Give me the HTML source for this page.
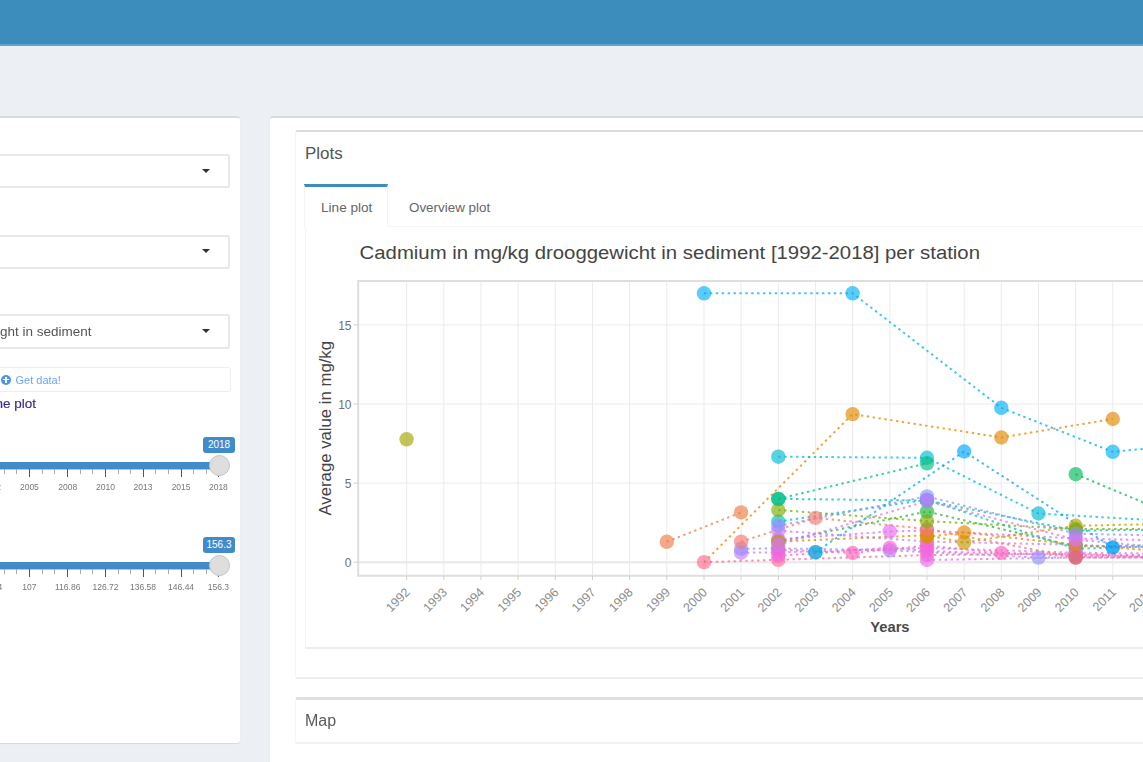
<!DOCTYPE html>
<html><head><meta charset="utf-8"><style>
html,body{margin:0;padding:0;width:1143px;height:762px;overflow:hidden;background:#ecf0f5;font-family:"Liberation Sans",sans-serif;position:relative}
svg text{font-family:"Liberation Sans",sans-serif}
.abs{position:absolute}
</style></head><body><div id="wrap" style="position:absolute;left:0;top:0;width:1143px;height:762px;overflow:hidden;filter:blur(0.45px)">
<div class="abs" style="left:0;top:0;width:1143px;height:46px;background:#3c8dbc;border-bottom:2px solid #62a3cb;box-sizing:border-box"></div>
<!-- left box -->
<div class="abs" style="left:-10px;top:116px;width:250px;height:627px;background:#fff;border-top:2.5px solid #d6dae2;box-sizing:border-box;border-radius:3px;box-shadow:0 1px 1px rgba(0,0,0,0.1)"></div>
<div style="position:absolute;left:-10px;top:153.8px;width:240px;height:34.5px;border:2px solid #e8e8e8;border-radius:2px;background:#fff;box-sizing:border-box"></div>
<div style="position:absolute;left:201.8px;top:168.8px;width:0;height:0;border-left:4.3px solid transparent;border-right:4.3px solid transparent;border-top:4.6px solid #333"></div>
<div style="position:absolute;left:-10px;top:234.5px;width:240px;height:34.5px;border:2px solid #e8e8e8;border-radius:2px;background:#fff;box-sizing:border-box"></div>
<div style="position:absolute;left:201.8px;top:249.4px;width:0;height:0;border-left:4.3px solid transparent;border-right:4.3px solid transparent;border-top:4.6px solid #333"></div>
<div style="position:absolute;left:-10px;top:314px;width:240px;height:34.5px;border:2px solid #e8e8e8;border-radius:2px;background:#fff;box-sizing:border-box"></div>
<div style="position:absolute;left:201.8px;top:328.9px;width:0;height:0;border-left:4.3px solid transparent;border-right:4.3px solid transparent;border-top:4.6px solid #333"></div>
<div style="position:absolute;left:-100px;top:315px;width:191.5px;height:34.5px;line-height:34.5px;text-align:right;font-size:13.5px;color:#555;white-space:nowrap">ght in sediment</div>
<div class="abs" style="left:-10px;top:367px;width:241px;height:25px;border:1px solid #eeeeee;border-radius:3px;box-sizing:border-box;background:#fff"></div>
<div class="abs" style="left:1px;top:374.5px;width:10px;height:10px;border-radius:50%;background:#4d94f0"></div>
<div class="abs" style="left:5.3px;top:376.5px;width:1.6px;height:6px;background:#fff"></div>
<div class="abs" style="left:3px;top:378.7px;width:6px;height:1.6px;background:#fff"></div>
<div class="abs" style="left:15.5px;top:373px;font-size:11px;line-height:14px;color:#6aa6f5;white-space:nowrap">Get data!</div>
<div class="abs" style="left:-100px;top:395.5px;width:136px;text-align:right;font-size:13.5px;line-height:16px;font-weight:normal;-webkit-text-stroke:0.15px #3b2a8a;color:#3b2a8a;white-space:nowrap">the plot</div>
<div style="position:absolute;left:203px;top:436.5px;width:32px;height:16px;background:#428bca;border-radius:3px;color:#fff;font-size:10px;line-height:16px;text-align:center">2018</div>
<div style="position:absolute;left:-5px;top:462px;width:224px;height:7px;background:#428bca"></div>
<div style="position:absolute;left:-5px;top:469px;width:224px;height:1px;background:#a9c9e8"></div>
<div style="position:absolute;left:-8.9px;top:469px;width:1.2px;height:8px;background:#555"></div>
<div style="position:absolute;left:3.7px;top:469px;width:1px;height:5px;background:#aaa"></div>
<div style="position:absolute;left:16.3px;top:469px;width:1px;height:5px;background:#aaa"></div>
<div style="position:absolute;left:28.9px;top:469px;width:1.2px;height:8px;background:#555"></div>
<div style="position:absolute;left:41.5px;top:469px;width:1px;height:5px;background:#aaa"></div>
<div style="position:absolute;left:54.1px;top:469px;width:1px;height:5px;background:#aaa"></div>
<div style="position:absolute;left:67.2px;top:469px;width:1.2px;height:8px;background:#555"></div>
<div style="position:absolute;left:79.8px;top:469px;width:1px;height:5px;background:#aaa"></div>
<div style="position:absolute;left:92.4px;top:469px;width:1px;height:5px;background:#aaa"></div>
<div style="position:absolute;left:105.0px;top:469px;width:1.2px;height:8px;background:#555"></div>
<div style="position:absolute;left:117.6px;top:469px;width:1px;height:5px;background:#aaa"></div>
<div style="position:absolute;left:130.2px;top:469px;width:1px;height:5px;background:#aaa"></div>
<div style="position:absolute;left:142.5px;top:469px;width:1.2px;height:8px;background:#555"></div>
<div style="position:absolute;left:155.1px;top:469px;width:1px;height:5px;background:#aaa"></div>
<div style="position:absolute;left:167.7px;top:469px;width:1px;height:5px;background:#aaa"></div>
<div style="position:absolute;left:180.6px;top:469px;width:1.2px;height:8px;background:#555"></div>
<div style="position:absolute;left:193.2px;top:469px;width:1px;height:5px;background:#aaa"></div>
<div style="position:absolute;left:205.8px;top:469px;width:1px;height:5px;background:#aaa"></div>
<div style="position:absolute;left:217.9px;top:469px;width:1.2px;height:8px;background:#555"></div>
<div style="position:absolute;left:-38.4px;top:482px;width:60px;text-align:center;font-size:8.5px;color:#777;line-height:10px">2002</div>
<div style="position:absolute;left:-0.6px;top:482px;width:60px;text-align:center;font-size:8.5px;color:#777;line-height:10px">2005</div>
<div style="position:absolute;left:37.7px;top:482px;width:60px;text-align:center;font-size:8.5px;color:#777;line-height:10px">2008</div>
<div style="position:absolute;left:75.5px;top:482px;width:60px;text-align:center;font-size:8.5px;color:#777;line-height:10px">2010</div>
<div style="position:absolute;left:113.0px;top:482px;width:60px;text-align:center;font-size:8.5px;color:#777;line-height:10px">2013</div>
<div style="position:absolute;left:151.1px;top:482px;width:60px;text-align:center;font-size:8.5px;color:#777;line-height:10px">2015</div>
<div style="position:absolute;left:188.4px;top:482px;width:60px;text-align:center;font-size:8.5px;color:#777;line-height:10px">2018</div>
<div style="position:absolute;left:208.5px;top:454.5px;width:19px;height:19px;border-radius:50%;background:#dedede;border:1px solid #c4c4c4"></div>
<div style="position:absolute;left:203px;top:537px;width:32px;height:16px;background:#428bca;border-radius:3px;color:#fff;font-size:10px;line-height:16px;text-align:center">156.3</div>
<div style="position:absolute;left:-5px;top:562px;width:224px;height:7px;background:#428bca"></div>
<div style="position:absolute;left:-5px;top:569px;width:224px;height:1px;background:#a9c9e8"></div>
<div style="position:absolute;left:-8.9px;top:569px;width:1.2px;height:8px;background:#555"></div>
<div style="position:absolute;left:3.7px;top:569px;width:1px;height:5px;background:#aaa"></div>
<div style="position:absolute;left:16.3px;top:569px;width:1px;height:5px;background:#aaa"></div>
<div style="position:absolute;left:28.9px;top:569px;width:1.2px;height:8px;background:#555"></div>
<div style="position:absolute;left:41.5px;top:569px;width:1px;height:5px;background:#aaa"></div>
<div style="position:absolute;left:54.1px;top:569px;width:1px;height:5px;background:#aaa"></div>
<div style="position:absolute;left:67.2px;top:569px;width:1.2px;height:8px;background:#555"></div>
<div style="position:absolute;left:79.8px;top:569px;width:1px;height:5px;background:#aaa"></div>
<div style="position:absolute;left:92.4px;top:569px;width:1px;height:5px;background:#aaa"></div>
<div style="position:absolute;left:105.0px;top:569px;width:1.2px;height:8px;background:#555"></div>
<div style="position:absolute;left:117.6px;top:569px;width:1px;height:5px;background:#aaa"></div>
<div style="position:absolute;left:130.2px;top:569px;width:1px;height:5px;background:#aaa"></div>
<div style="position:absolute;left:142.5px;top:569px;width:1.2px;height:8px;background:#555"></div>
<div style="position:absolute;left:155.1px;top:569px;width:1px;height:5px;background:#aaa"></div>
<div style="position:absolute;left:167.7px;top:569px;width:1px;height:5px;background:#aaa"></div>
<div style="position:absolute;left:180.6px;top:569px;width:1.2px;height:8px;background:#555"></div>
<div style="position:absolute;left:193.2px;top:569px;width:1px;height:5px;background:#aaa"></div>
<div style="position:absolute;left:205.8px;top:569px;width:1px;height:5px;background:#aaa"></div>
<div style="position:absolute;left:217.9px;top:569px;width:1.2px;height:8px;background:#555"></div>
<div style="position:absolute;left:-38.4px;top:582px;width:60px;text-align:center;font-size:8.5px;color:#777;line-height:10px">97.14</div>
<div style="position:absolute;left:-0.6px;top:582px;width:60px;text-align:center;font-size:8.5px;color:#777;line-height:10px">107</div>
<div style="position:absolute;left:37.7px;top:582px;width:60px;text-align:center;font-size:8.5px;color:#777;line-height:10px">116.86</div>
<div style="position:absolute;left:75.5px;top:582px;width:60px;text-align:center;font-size:8.5px;color:#777;line-height:10px">126.72</div>
<div style="position:absolute;left:113.0px;top:582px;width:60px;text-align:center;font-size:8.5px;color:#777;line-height:10px">136.58</div>
<div style="position:absolute;left:151.1px;top:582px;width:60px;text-align:center;font-size:8.5px;color:#777;line-height:10px">146.44</div>
<div style="position:absolute;left:188.4px;top:582px;width:60px;text-align:center;font-size:8.5px;color:#777;line-height:10px">156.3</div>
<div style="position:absolute;left:208.5px;top:554.5px;width:19px;height:19px;border-radius:50%;background:#dedede;border:1px solid #c4c4c4"></div>
<!-- right box -->
<div class="abs" style="left:270px;top:116px;width:900px;height:700px;background:#fff;border-top:2.5px solid #d6dae2;box-sizing:border-box;border-radius:3px;box-shadow:0 1px 1px rgba(0,0,0,0.1)"></div>
<div class="abs" style="left:295px;top:130px;width:900px;height:549px;background:#fff;border-top:2px solid #d8dbe0;border-left:1px solid #f5f5f5;border-bottom:2px solid #ececec;box-sizing:border-box;border-radius:3px"></div>
<div class="abs" style="left:305px;top:143.8px;font-size:17px;line-height:20px;color:#555">Plots</div>
<div class="abs" style="left:304px;top:184px;width:84px;height:43px;border-top:3px solid #3c8dbc;box-sizing:border-box;border-left:1px solid #f4f4f4;border-right:1px solid #f4f4f4"></div>
<div class="abs" style="left:388px;top:226px;width:800px;height:1px;background:#f4f4f4"></div>
<div class="abs" style="left:305px;top:227px;width:900px;height:422px;border-left:1px solid #f4f4f4;border-bottom:2px solid #eeeeee;box-sizing:border-box"></div>
<div class="abs" style="left:321px;top:200px;font-size:13.6px;line-height:16px;color:#666;white-space:nowrap">Line plot</div>
<div class="abs" style="left:409px;top:200px;font-size:13.4px;line-height:16px;color:#666;white-space:nowrap">Overview plot</div>
<svg id="chart" width="1143" height="762" viewBox="0 0 1143 762" style="position:absolute;left:0;top:0">
<defs><clipPath id="pc"><rect x="359" y="282" width="800" height="293"/></clipPath></defs>
<line x1="359" x2="1143" y1="324.9" y2="324.9" stroke="#ebebeb" stroke-width="1"/>
<line x1="359" x2="1143" y1="404.0" y2="404.0" stroke="#ebebeb" stroke-width="1"/>
<line x1="359" x2="1143" y1="483.1" y2="483.1" stroke="#ebebeb" stroke-width="1"/>
<line x1="359" x2="1143" y1="562.2" y2="562.2" stroke="#ebebeb" stroke-width="2.5"/>
<line x1="406.6" x2="406.6" y1="282" y2="575" stroke="#ebebeb" stroke-width="1"/>
<line x1="443.8" x2="443.8" y1="282" y2="575" stroke="#ebebeb" stroke-width="1"/>
<line x1="480.9" x2="480.9" y1="282" y2="575" stroke="#ebebeb" stroke-width="1"/>
<line x1="518.1" x2="518.1" y1="282" y2="575" stroke="#ebebeb" stroke-width="1"/>
<line x1="555.3" x2="555.3" y1="282" y2="575" stroke="#ebebeb" stroke-width="1"/>
<line x1="592.5" x2="592.5" y1="282" y2="575" stroke="#ebebeb" stroke-width="1"/>
<line x1="629.6" x2="629.6" y1="282" y2="575" stroke="#ebebeb" stroke-width="1"/>
<line x1="666.8" x2="666.8" y1="282" y2="575" stroke="#ebebeb" stroke-width="1"/>
<line x1="704.0" x2="704.0" y1="282" y2="575" stroke="#ebebeb" stroke-width="1"/>
<line x1="741.1" x2="741.1" y1="282" y2="575" stroke="#ebebeb" stroke-width="1"/>
<line x1="778.3" x2="778.3" y1="282" y2="575" stroke="#ebebeb" stroke-width="1"/>
<line x1="815.5" x2="815.5" y1="282" y2="575" stroke="#ebebeb" stroke-width="1"/>
<line x1="852.6" x2="852.6" y1="282" y2="575" stroke="#ebebeb" stroke-width="1"/>
<line x1="889.8" x2="889.8" y1="282" y2="575" stroke="#ebebeb" stroke-width="1"/>
<line x1="927.0" x2="927.0" y1="282" y2="575" stroke="#ebebeb" stroke-width="1"/>
<line x1="964.2" x2="964.2" y1="282" y2="575" stroke="#ebebeb" stroke-width="1"/>
<line x1="1001.3" x2="1001.3" y1="282" y2="575" stroke="#ebebeb" stroke-width="1"/>
<line x1="1038.5" x2="1038.5" y1="282" y2="575" stroke="#ebebeb" stroke-width="1"/>
<line x1="1075.7" x2="1075.7" y1="282" y2="575" stroke="#ebebeb" stroke-width="1"/>
<line x1="1112.8" x2="1112.8" y1="282" y2="575" stroke="#ebebeb" stroke-width="1"/>
<line x1="1150.0" x2="1150.0" y1="282" y2="575" stroke="#ebebeb" stroke-width="1"/>
<path d="M358.2 575.7 V281 H1143" fill="none" stroke="#dedede" stroke-width="2"/>
<line x1="357" x2="1143" y1="575.7" y2="575.7" stroke="#dedede" stroke-width="2"/>
<line x1="353.5" x2="358" y1="324.9" y2="324.9" stroke="#d0d0d0" stroke-width="1"/>
<text x="351.5" y="329.9" text-anchor="end" font-size="12" fill="#707070">15</text>
<line x1="353.5" x2="358" y1="404.0" y2="404.0" stroke="#d0d0d0" stroke-width="1"/>
<text x="351.5" y="409.0" text-anchor="end" font-size="12" fill="#707070">10</text>
<line x1="353.5" x2="358" y1="483.1" y2="483.1" stroke="#d0d0d0" stroke-width="1"/>
<text x="351.5" y="488.1" text-anchor="end" font-size="12" fill="#707070">5</text>
<line x1="353.5" x2="358" y1="562.2" y2="562.2" stroke="#d0d0d0" stroke-width="1"/>
<text x="351.5" y="567.2" text-anchor="end" font-size="12" fill="#707070">0</text>
<line x1="406.6" x2="406.6" y1="576" y2="580" stroke="#d0d0d0" stroke-width="1"/>
<text transform="translate(410.6,593) rotate(-45)" text-anchor="end" font-size="12.5" fill="#8c8c8c">1992</text>
<line x1="443.8" x2="443.8" y1="576" y2="580" stroke="#d0d0d0" stroke-width="1"/>
<text transform="translate(447.8,593) rotate(-45)" text-anchor="end" font-size="12.5" fill="#8c8c8c">1993</text>
<line x1="480.9" x2="480.9" y1="576" y2="580" stroke="#d0d0d0" stroke-width="1"/>
<text transform="translate(484.9,593) rotate(-45)" text-anchor="end" font-size="12.5" fill="#8c8c8c">1994</text>
<line x1="518.1" x2="518.1" y1="576" y2="580" stroke="#d0d0d0" stroke-width="1"/>
<text transform="translate(522.1,593) rotate(-45)" text-anchor="end" font-size="12.5" fill="#8c8c8c">1995</text>
<line x1="555.3" x2="555.3" y1="576" y2="580" stroke="#d0d0d0" stroke-width="1"/>
<text transform="translate(559.3,593) rotate(-45)" text-anchor="end" font-size="12.5" fill="#8c8c8c">1996</text>
<line x1="592.5" x2="592.5" y1="576" y2="580" stroke="#d0d0d0" stroke-width="1"/>
<text transform="translate(596.5,593) rotate(-45)" text-anchor="end" font-size="12.5" fill="#8c8c8c">1997</text>
<line x1="629.6" x2="629.6" y1="576" y2="580" stroke="#d0d0d0" stroke-width="1"/>
<text transform="translate(633.6,593) rotate(-45)" text-anchor="end" font-size="12.5" fill="#8c8c8c">1998</text>
<line x1="666.8" x2="666.8" y1="576" y2="580" stroke="#d0d0d0" stroke-width="1"/>
<text transform="translate(670.8,593) rotate(-45)" text-anchor="end" font-size="12.5" fill="#8c8c8c">1999</text>
<line x1="704.0" x2="704.0" y1="576" y2="580" stroke="#d0d0d0" stroke-width="1"/>
<text transform="translate(708.0,593) rotate(-45)" text-anchor="end" font-size="12.5" fill="#8c8c8c">2000</text>
<line x1="741.1" x2="741.1" y1="576" y2="580" stroke="#d0d0d0" stroke-width="1"/>
<text transform="translate(745.1,593) rotate(-45)" text-anchor="end" font-size="12.5" fill="#8c8c8c">2001</text>
<line x1="778.3" x2="778.3" y1="576" y2="580" stroke="#d0d0d0" stroke-width="1"/>
<text transform="translate(782.3,593) rotate(-45)" text-anchor="end" font-size="12.5" fill="#8c8c8c">2002</text>
<line x1="815.5" x2="815.5" y1="576" y2="580" stroke="#d0d0d0" stroke-width="1"/>
<text transform="translate(819.5,593) rotate(-45)" text-anchor="end" font-size="12.5" fill="#8c8c8c">2003</text>
<line x1="852.6" x2="852.6" y1="576" y2="580" stroke="#d0d0d0" stroke-width="1"/>
<text transform="translate(856.6,593) rotate(-45)" text-anchor="end" font-size="12.5" fill="#8c8c8c">2004</text>
<line x1="889.8" x2="889.8" y1="576" y2="580" stroke="#d0d0d0" stroke-width="1"/>
<text transform="translate(893.8,593) rotate(-45)" text-anchor="end" font-size="12.5" fill="#8c8c8c">2005</text>
<line x1="927.0" x2="927.0" y1="576" y2="580" stroke="#d0d0d0" stroke-width="1"/>
<text transform="translate(931.0,593) rotate(-45)" text-anchor="end" font-size="12.5" fill="#8c8c8c">2006</text>
<line x1="964.2" x2="964.2" y1="576" y2="580" stroke="#d0d0d0" stroke-width="1"/>
<text transform="translate(968.2,593) rotate(-45)" text-anchor="end" font-size="12.5" fill="#8c8c8c">2007</text>
<line x1="1001.3" x2="1001.3" y1="576" y2="580" stroke="#d0d0d0" stroke-width="1"/>
<text transform="translate(1005.3,593) rotate(-45)" text-anchor="end" font-size="12.5" fill="#8c8c8c">2008</text>
<line x1="1038.5" x2="1038.5" y1="576" y2="580" stroke="#d0d0d0" stroke-width="1"/>
<text transform="translate(1042.5,593) rotate(-45)" text-anchor="end" font-size="12.5" fill="#8c8c8c">2009</text>
<line x1="1075.7" x2="1075.7" y1="576" y2="580" stroke="#d0d0d0" stroke-width="1"/>
<text transform="translate(1079.7,593) rotate(-45)" text-anchor="end" font-size="12.5" fill="#8c8c8c">2010</text>
<line x1="1112.8" x2="1112.8" y1="576" y2="580" stroke="#d0d0d0" stroke-width="1"/>
<text transform="translate(1116.8,593) rotate(-45)" text-anchor="end" font-size="12.5" fill="#8c8c8c">2011</text>
<line x1="1150.0" x2="1150.0" y1="576" y2="580" stroke="#d0d0d0" stroke-width="1"/>
<text transform="translate(1154.0,593) rotate(-45)" text-anchor="end" font-size="12.5" fill="#8c8c8c">2012</text>
<text x="359.6" y="258.6" font-size="19.2" fill="#444" textLength="620.4" lengthAdjust="spacingAndGlyphs">Cadmium in mg/kg drooggewicht in sediment [1992-2018] per station</text>
<text x="870.2" y="632.4" font-size="15.2" font-weight="bold" fill="#4a4a4a" textLength="39.4" lengthAdjust="spacingAndGlyphs">Years</text>
<text transform="translate(330.5,515.5) rotate(-90)" font-size="16.6" fill="#444" textLength="174.5" lengthAdjust="spacingAndGlyphs">Average value in mg/kg</text>
<g clip-path="url(#pc)">
<path d="M704.0 562.2 L852.6 414.1 L1001.3 437.5 L1112.8 419.0" fill="none" stroke="#E38900" stroke-width="2" stroke-dasharray="2.4 3.5" opacity="0.75"/>
<path d="M778.3 541.6 L927.0 511.6 L1075.7 546.4 L1150.0 545.6" fill="none" stroke="#1DB53A" stroke-width="2" stroke-dasharray="2.4 3.5" opacity="0.75"/>
<path d="M778.3 498.9 L927.0 500.5 L1075.7 530.6 L1150.0 529.8" fill="none" stroke="#00C1A7" stroke-width="2" stroke-dasharray="2.4 3.5" opacity="0.75"/>
<path d="M778.3 521.5 L927.0 499.7 L1075.7 548.8 L1150.0 546.4" fill="none" stroke="#00BFC4" stroke-width="2" stroke-dasharray="2.4 3.5" opacity="0.75"/>
<path d="M704.0 562.2 L778.3 559.8 L927.0 555.1 L1075.7 553.5 L1150.0 557.5" fill="none" stroke="#FF6C90" stroke-width="2" stroke-dasharray="2.4 3.5" opacity="0.75"/>
<path d="M741.1 552.7 L778.3 552.4 L927.0 548.0 L1075.7 552.7 L1150.0 553.5" fill="none" stroke="#C77CFF" stroke-width="2" stroke-dasharray="2.4 3.5" opacity="0.75"/>
<path d="M741.1 548.8 L778.3 548.3 L889.8 550.3 L1038.5 557.6 L1150.0 556.7" fill="none" stroke="#9590FF" stroke-width="2" stroke-dasharray="2.4 3.5" opacity="0.75"/>
<path d="M778.3 530.6 L927.0 541.6 L1075.7 544.8 L1150.0 548.0" fill="none" stroke="#C77CFF" stroke-width="2" stroke-dasharray="2.4 3.5" opacity="0.75"/>
<path d="M778.3 549.5 L852.6 553.0 L927.0 545.6 L1001.3 552.9 L1075.7 554.3 L1150.0 555.9" fill="none" stroke="#FF62BC" stroke-width="2" stroke-dasharray="2.4 3.5" opacity="0.75"/>
<path d="M778.3 555.9 L889.8 547.6 L927.0 551.1 L1075.7 555.9 L1150.0 555.1" fill="none" stroke="#FA62DB" stroke-width="2" stroke-dasharray="2.4 3.5" opacity="0.75"/>
<path d="M927.0 560.0 L1075.7 557.5 L1150.0 557.5" fill="none" stroke="#E76BF3" stroke-width="2" stroke-dasharray="2.4 3.5" opacity="0.75"/>
<path d="M778.3 539.3 L889.8 531.4 L927.0 530.6 L1075.7 538.5 L1150.0 540.1" fill="none" stroke="#E76BF3" stroke-width="2" stroke-dasharray="2.4 3.5" opacity="0.75"/>
<path d="M778.3 541.6 L927.0 535.3 L964.2 542.4 L1075.7 525.8 L1150.0 524.2" fill="none" stroke="#C49A00" stroke-width="2" stroke-dasharray="2.4 3.5" opacity="0.75"/>
<path d="M927.0 536.9 L964.2 532.5 L1075.7 544.8 L1150.0 550.3" fill="none" stroke="#E38900" stroke-width="2" stroke-dasharray="2.4 3.5" opacity="0.75"/>
<path d="M741.1 541.6 L815.5 517.9 L927.0 529.0 L1075.7 557.6 L1150.0 557.5" fill="none" stroke="#F8766D" stroke-width="2" stroke-dasharray="2.4 3.5" opacity="0.75"/>
<path d="M778.3 510.0 L927.0 521.1 L1075.7 529.0 L1150.0 529.0" fill="none" stroke="#7CAE00" stroke-width="2" stroke-dasharray="2.4 3.5" opacity="0.75"/>
<path d="M778.3 525.8 L927.0 496.4 L1075.7 533.7 L1150.0 535.3" fill="none" stroke="#9590FF" stroke-width="2" stroke-dasharray="2.4 3.5" opacity="0.75"/>
<path d="M778.3 544.8 L927.0 501.0 L1075.7 539.6 L1150.0 546.4" fill="none" stroke="#D575FE" stroke-width="2" stroke-dasharray="2.4 3.5" opacity="0.75"/>
<path d="M666.8 541.8 L741.1 512.4" fill="none" stroke="#EE7D45" stroke-width="2" stroke-dasharray="2.4 3.5" opacity="0.75"/>
<path d="M704.0 293.3 L852.6 293.3 L1001.3 407.8 L1112.8 451.8 L1150.0 448.3" fill="none" stroke="#00B0F6" stroke-width="2" stroke-dasharray="2.4 3.5" opacity="0.75"/>
<path d="M778.3 456.7 L927.0 457.8 L1038.5 513.5 L1150.0 520.0" fill="none" stroke="#00BCD6" stroke-width="2" stroke-dasharray="2.4 3.5" opacity="0.75"/>
<path d="M778.3 498.9 L927.0 463.3" fill="none" stroke="#00BF7D" stroke-width="2" stroke-dasharray="2.4 3.5" opacity="0.75"/>
<path d="M1075.7 474.2 L1150.0 505.2" fill="none" stroke="#00BA5A" stroke-width="2" stroke-dasharray="2.4 3.5" opacity="0.75"/>
<path d="M815.5 552.2 L964.2 451.5 L1112.8 547.5" fill="none" stroke="#00A5FF" stroke-width="2" stroke-dasharray="2.4 3.5" opacity="0.75"/>
<circle cx="406.6" cy="439.3" r="7.2" fill="#A3A500" fill-opacity="0.65"/>
<circle cx="852.6" cy="414.1" r="7.2" fill="#E38900" fill-opacity="0.65"/>
<circle cx="1001.3" cy="437.5" r="7.2" fill="#E38900" fill-opacity="0.65"/>
<circle cx="1112.8" cy="419.0" r="7.2" fill="#E38900" fill-opacity="0.65"/>
<circle cx="778.3" cy="541.6" r="7.2" fill="#1DB53A" fill-opacity="0.65"/>
<circle cx="927.0" cy="511.6" r="7.2" fill="#1DB53A" fill-opacity="0.65"/>
<circle cx="1075.7" cy="546.4" r="7.2" fill="#1DB53A" fill-opacity="0.65"/>
<circle cx="1150.0" cy="545.6" r="7.2" fill="#1DB53A" fill-opacity="0.65"/>
<circle cx="778.3" cy="498.9" r="7.2" fill="#00C1A7" fill-opacity="0.65"/>
<circle cx="927.0" cy="500.5" r="7.2" fill="#00C1A7" fill-opacity="0.65"/>
<circle cx="1075.7" cy="530.6" r="7.2" fill="#00C1A7" fill-opacity="0.65"/>
<circle cx="1150.0" cy="529.8" r="7.2" fill="#00C1A7" fill-opacity="0.65"/>
<circle cx="778.3" cy="521.5" r="7.2" fill="#00BFC4" fill-opacity="0.65"/>
<circle cx="927.0" cy="499.7" r="7.2" fill="#00BFC4" fill-opacity="0.65"/>
<circle cx="1075.7" cy="548.8" r="7.2" fill="#00BFC4" fill-opacity="0.65"/>
<circle cx="1150.0" cy="546.4" r="7.2" fill="#00BFC4" fill-opacity="0.65"/>
<circle cx="704.0" cy="562.2" r="7.2" fill="#FF6C90" fill-opacity="0.65"/>
<circle cx="778.3" cy="559.8" r="7.2" fill="#FF6C90" fill-opacity="0.65"/>
<circle cx="927.0" cy="555.1" r="7.2" fill="#FF6C90" fill-opacity="0.65"/>
<circle cx="1075.7" cy="553.5" r="7.2" fill="#FF6C90" fill-opacity="0.65"/>
<circle cx="1150.0" cy="557.5" r="7.2" fill="#FF6C90" fill-opacity="0.65"/>
<circle cx="741.1" cy="552.7" r="7.2" fill="#C77CFF" fill-opacity="0.65"/>
<circle cx="778.3" cy="552.4" r="7.2" fill="#C77CFF" fill-opacity="0.65"/>
<circle cx="927.0" cy="548.0" r="7.2" fill="#C77CFF" fill-opacity="0.65"/>
<circle cx="1075.7" cy="552.7" r="7.2" fill="#C77CFF" fill-opacity="0.65"/>
<circle cx="1150.0" cy="553.5" r="7.2" fill="#C77CFF" fill-opacity="0.65"/>
<circle cx="741.1" cy="548.8" r="7.2" fill="#9590FF" fill-opacity="0.65"/>
<circle cx="778.3" cy="548.3" r="7.2" fill="#9590FF" fill-opacity="0.65"/>
<circle cx="889.8" cy="550.3" r="7.2" fill="#9590FF" fill-opacity="0.65"/>
<circle cx="1038.5" cy="557.6" r="7.2" fill="#9590FF" fill-opacity="0.65"/>
<circle cx="1150.0" cy="556.7" r="7.2" fill="#9590FF" fill-opacity="0.65"/>
<circle cx="778.3" cy="530.6" r="7.2" fill="#C77CFF" fill-opacity="0.65"/>
<circle cx="927.0" cy="541.6" r="7.2" fill="#C77CFF" fill-opacity="0.65"/>
<circle cx="1075.7" cy="544.8" r="7.2" fill="#C77CFF" fill-opacity="0.65"/>
<circle cx="1150.0" cy="548.0" r="7.2" fill="#C77CFF" fill-opacity="0.65"/>
<circle cx="778.3" cy="549.5" r="7.2" fill="#FF62BC" fill-opacity="0.65"/>
<circle cx="852.6" cy="553.0" r="7.2" fill="#FF62BC" fill-opacity="0.65"/>
<circle cx="927.0" cy="545.6" r="7.2" fill="#FF62BC" fill-opacity="0.65"/>
<circle cx="1001.3" cy="552.9" r="7.2" fill="#FF62BC" fill-opacity="0.65"/>
<circle cx="1075.7" cy="554.3" r="7.2" fill="#FF62BC" fill-opacity="0.65"/>
<circle cx="1150.0" cy="555.9" r="7.2" fill="#FF62BC" fill-opacity="0.65"/>
<circle cx="778.3" cy="555.9" r="7.2" fill="#FA62DB" fill-opacity="0.65"/>
<circle cx="889.8" cy="547.6" r="7.2" fill="#FA62DB" fill-opacity="0.65"/>
<circle cx="927.0" cy="551.1" r="7.2" fill="#FA62DB" fill-opacity="0.65"/>
<circle cx="1075.7" cy="555.9" r="7.2" fill="#FA62DB" fill-opacity="0.65"/>
<circle cx="1150.0" cy="555.1" r="7.2" fill="#FA62DB" fill-opacity="0.65"/>
<circle cx="927.0" cy="560.0" r="7.2" fill="#E76BF3" fill-opacity="0.65"/>
<circle cx="1075.7" cy="557.5" r="7.2" fill="#E76BF3" fill-opacity="0.65"/>
<circle cx="1150.0" cy="557.5" r="7.2" fill="#E76BF3" fill-opacity="0.65"/>
<circle cx="778.3" cy="539.3" r="7.2" fill="#E76BF3" fill-opacity="0.65"/>
<circle cx="889.8" cy="531.4" r="7.2" fill="#E76BF3" fill-opacity="0.65"/>
<circle cx="927.0" cy="530.6" r="7.2" fill="#E76BF3" fill-opacity="0.65"/>
<circle cx="1075.7" cy="538.5" r="7.2" fill="#E76BF3" fill-opacity="0.65"/>
<circle cx="1150.0" cy="540.1" r="7.2" fill="#E76BF3" fill-opacity="0.65"/>
<circle cx="778.3" cy="541.6" r="7.2" fill="#C49A00" fill-opacity="0.65"/>
<circle cx="927.0" cy="535.3" r="7.2" fill="#C49A00" fill-opacity="0.65"/>
<circle cx="964.2" cy="542.4" r="7.2" fill="#C49A00" fill-opacity="0.65"/>
<circle cx="1075.7" cy="525.8" r="7.2" fill="#C49A00" fill-opacity="0.65"/>
<circle cx="1150.0" cy="524.2" r="7.2" fill="#C49A00" fill-opacity="0.65"/>
<circle cx="927.0" cy="536.9" r="7.2" fill="#E38900" fill-opacity="0.65"/>
<circle cx="964.2" cy="532.5" r="7.2" fill="#E38900" fill-opacity="0.65"/>
<circle cx="1075.7" cy="544.8" r="7.2" fill="#E38900" fill-opacity="0.65"/>
<circle cx="1150.0" cy="550.3" r="7.2" fill="#E38900" fill-opacity="0.65"/>
<circle cx="741.1" cy="541.6" r="7.2" fill="#F8766D" fill-opacity="0.65"/>
<circle cx="815.5" cy="517.9" r="7.2" fill="#F8766D" fill-opacity="0.65"/>
<circle cx="927.0" cy="529.0" r="7.2" fill="#F8766D" fill-opacity="0.65"/>
<circle cx="1075.7" cy="557.6" r="7.2" fill="#F8766D" fill-opacity="0.65"/>
<circle cx="1150.0" cy="557.5" r="7.2" fill="#F8766D" fill-opacity="0.65"/>
<circle cx="778.3" cy="510.0" r="7.2" fill="#7CAE00" fill-opacity="0.65"/>
<circle cx="927.0" cy="521.1" r="7.2" fill="#7CAE00" fill-opacity="0.65"/>
<circle cx="1075.7" cy="529.0" r="7.2" fill="#7CAE00" fill-opacity="0.65"/>
<circle cx="1150.0" cy="529.0" r="7.2" fill="#7CAE00" fill-opacity="0.65"/>
<circle cx="778.3" cy="525.8" r="7.2" fill="#9590FF" fill-opacity="0.65"/>
<circle cx="927.0" cy="496.4" r="7.2" fill="#9590FF" fill-opacity="0.65"/>
<circle cx="1075.7" cy="533.7" r="7.2" fill="#9590FF" fill-opacity="0.65"/>
<circle cx="1150.0" cy="535.3" r="7.2" fill="#9590FF" fill-opacity="0.65"/>
<circle cx="778.3" cy="544.8" r="7.2" fill="#D575FE" fill-opacity="0.65"/>
<circle cx="927.0" cy="501.0" r="7.2" fill="#D575FE" fill-opacity="0.65"/>
<circle cx="1075.7" cy="539.6" r="7.2" fill="#D575FE" fill-opacity="0.65"/>
<circle cx="1150.0" cy="546.4" r="7.2" fill="#D575FE" fill-opacity="0.65"/>
<circle cx="666.8" cy="541.8" r="7.2" fill="#EE7D45" fill-opacity="0.65"/>
<circle cx="741.1" cy="512.4" r="7.2" fill="#EE7D45" fill-opacity="0.65"/>
<circle cx="704.0" cy="293.3" r="7.2" fill="#00B0F6" fill-opacity="0.65"/>
<circle cx="852.6" cy="293.3" r="7.2" fill="#00B0F6" fill-opacity="0.65"/>
<circle cx="1001.3" cy="407.8" r="7.2" fill="#00B0F6" fill-opacity="0.65"/>
<circle cx="1112.8" cy="451.8" r="7.2" fill="#00B0F6" fill-opacity="0.65"/>
<circle cx="1150.0" cy="448.3" r="7.2" fill="#00B0F6" fill-opacity="0.65"/>
<circle cx="778.3" cy="456.7" r="7.2" fill="#00BCD6" fill-opacity="0.65"/>
<circle cx="927.0" cy="457.8" r="7.2" fill="#00BCD6" fill-opacity="0.65"/>
<circle cx="1038.5" cy="513.5" r="7.2" fill="#00BCD6" fill-opacity="0.65"/>
<circle cx="1150.0" cy="520.0" r="7.2" fill="#00BCD6" fill-opacity="0.65"/>
<circle cx="778.3" cy="498.9" r="7.2" fill="#00BF7D" fill-opacity="0.65"/>
<circle cx="927.0" cy="463.3" r="7.2" fill="#00BF7D" fill-opacity="0.65"/>
<circle cx="1075.7" cy="474.2" r="7.2" fill="#00BA5A" fill-opacity="0.65"/>
<circle cx="1150.0" cy="505.2" r="7.2" fill="#00BA5A" fill-opacity="0.65"/>
<circle cx="815.5" cy="552.2" r="7.2" fill="#00A5FF" fill-opacity="0.65"/>
<circle cx="964.2" cy="451.5" r="7.2" fill="#00A5FF" fill-opacity="0.65"/>
<circle cx="1112.8" cy="547.5" r="7.2" fill="#00A5FF" fill-opacity="0.65"/>
<circle cx="815.5" cy="552.2" r="7.2" fill="#1BA8C8" fill-opacity="0.5"/>
<circle cx="1112.8" cy="547.5" r="7.2" fill="#0095E0" fill-opacity="0.4"/>
<circle cx="1075.7" cy="557.6" r="7.2" fill="#9A6A50" fill-opacity="0.3"/>
</g>
</svg>
<div class="abs" style="left:295px;top:697px;width:900px;height:47px;background:#fff;border-top:3px solid #dcdfe6;border-left:1px solid #f5f5f5;border-bottom:2px solid #f1f1f1;box-sizing:border-box;border-radius:3px"></div>
<div class="abs" style="left:305px;top:711px;font-size:16px;line-height:19px;color:#5a5a5a">Map</div>
</div></body></html>
